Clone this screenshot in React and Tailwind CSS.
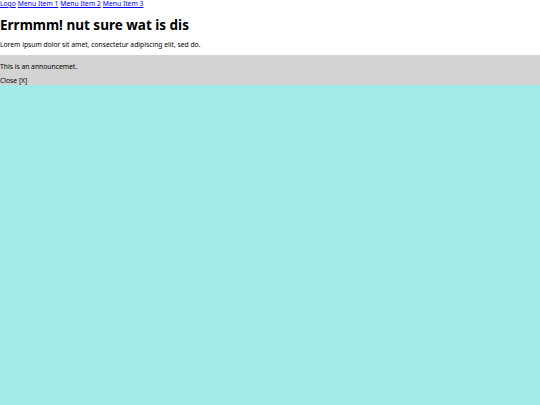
export default function App() {
  const font = { fontFamily: '"Noto Sans", sans-serif' };
  return (
    <div className="min-h-[405px] flex flex-col bg-white text-black" style={font}>
      <nav className="text-[6.75px] leading-[8px] flex gap-[2px]">
        <a href="#" className="text-[#0000ee] underline">Logo</a>
        <a href="#" className="text-[#0000ee] underline">Menu Item 1</a>
        <a href="#" className="text-[#0000ee] underline">Menu Item 2</a>
        <a href="#" className="text-[#0000ee] underline">Menu Item 3</a>
      </nav>
      <h1 className="text-[13.5px] font-bold leading-[18px] mt-[7.5px]">Errmmm! nut sure wat is dis</h1>
      <p className="text-[6.75px] leading-[10px] mt-[6.5px] mb-[5px]">Lorem ipsum dolor sit amet, consectetur adipiscing elit, sed do.</p>
      <div className="bg-[#d3d3d3] text-[6.75px] leading-[10px] pt-[7px] h-[29.7px]">
        <p>This is an announcemet.</p>
        <p className="mt-[4px]">Close [X]</p>
      </div>
      <div className="flex-1 bg-[#a0eaea]"></div>
    </div>
  );
}
